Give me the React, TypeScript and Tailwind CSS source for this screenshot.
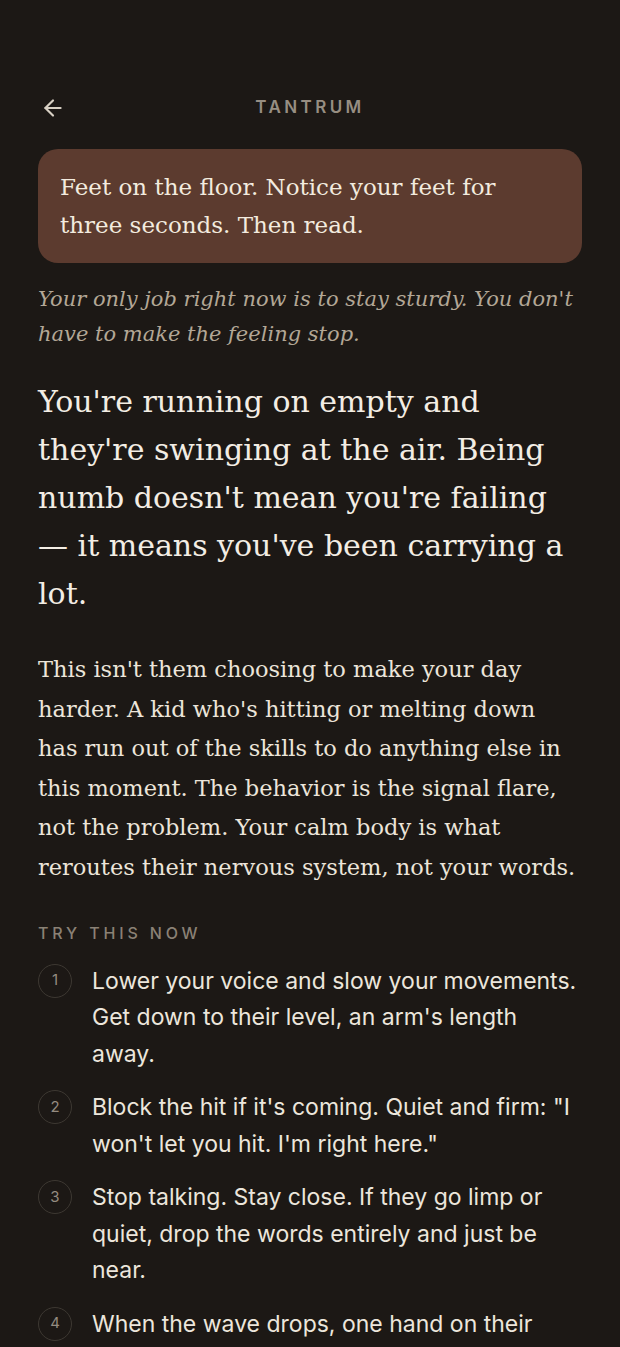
import { ArrowLeft } from 'lucide-react';

const steps = [
  'Lower your voice and slow your movements. Get down to their level, an arm\'s length away.',
  'Block the hit if it\'s coming. Quiet and firm: "I won\'t let you hit. I\'m right here."',
  'Stop talking. Stay close. If they go limp or quiet, drop the words entirely and just be near.',
  'When the wave drops, one hand on their back. Breathe slow enough that they can hear it.',
];

const serif = "font-['Georgia','DejaVu_Serif',serif]";

export default function App() {
  return (
    <div className="min-h-[1347px] bg-[#1c1815] text-[#efe8dd]">
      <div className="px-[38px] pt-[88px]">
        {/* Header */}
        <header className="relative flex h-[40px] items-center justify-center">
          <button className="absolute left-[2px] text-[#d8d0c4]" aria-label="Back">
            <ArrowLeft className="h-[26px] w-[26px]" strokeWidth={2} />
          </button>
          <h1 className="font-['Inter',sans-serif] text-[17px] font-semibold tracking-[0.2em] text-[#978e82]">
            TANTRUM
          </h1>
        </header>

        {/* Grounding card */}
        <div className="mt-[21px] rounded-[20px] bg-[#5c3b2f] px-[22px] py-[19px]">
          <p className={`${serif} text-[23px] leading-[38px] text-[#f3ebdf]`}>
            Feet on the floor. Notice your feet for three seconds. Then read.
          </p>
        </div>

        <p className={`${serif} mt-[19px] text-[21px] italic leading-[35px] text-[#b3a796]`}>
          Your only job right now is to stay sturdy. You don't have to make the feeling stop.
        </p>

        <h2 className={`${serif} mt-[26px] text-[30px] leading-[48px] text-[#f3ede4]`}>
          You're running on empty and they're swinging at the air. Being numb doesn't mean you're failing — it means you've been carrying a lot.
        </h2>

        <p className={`${serif} mt-[32px] max-w-[538px] text-[22.5px] leading-[39.6px] text-[#ece5da]`}>
          This isn't them choosing to make your day harder. A kid who's hitting or melting down has run out of the
          skills to do anything else in this moment. The behavior is the signal flare, not the problem. Your calm body
          is what reroutes their nervous system, not your words.
        </p>

        <h3 className="mt-[33px] font-['Inter',sans-serif] text-[16px] font-medium tracking-[0.24em] text-[#8a8175]">
          TRY THIS NOW
        </h3>

        {/* Steps */}
        <ol className="mt-[18px] flex flex-col gap-[16.5px] font-['Inter',sans-serif]">
          {steps.map((s, i) => (
            <li key={i} className="flex gap-[20px]">
              <span className="mt-[1px] flex h-[34px] w-[34px] shrink-0 items-center justify-center rounded-full border border-[#3d3832] text-[15px] text-[#948b80]">
                {i + 1}
              </span>
              <p className="text-[23px] leading-[36.7px] text-[#ece6dc]">{s}</p>
            </li>
          ))}
        </ol>
      </div>
    </div>
  );
}
